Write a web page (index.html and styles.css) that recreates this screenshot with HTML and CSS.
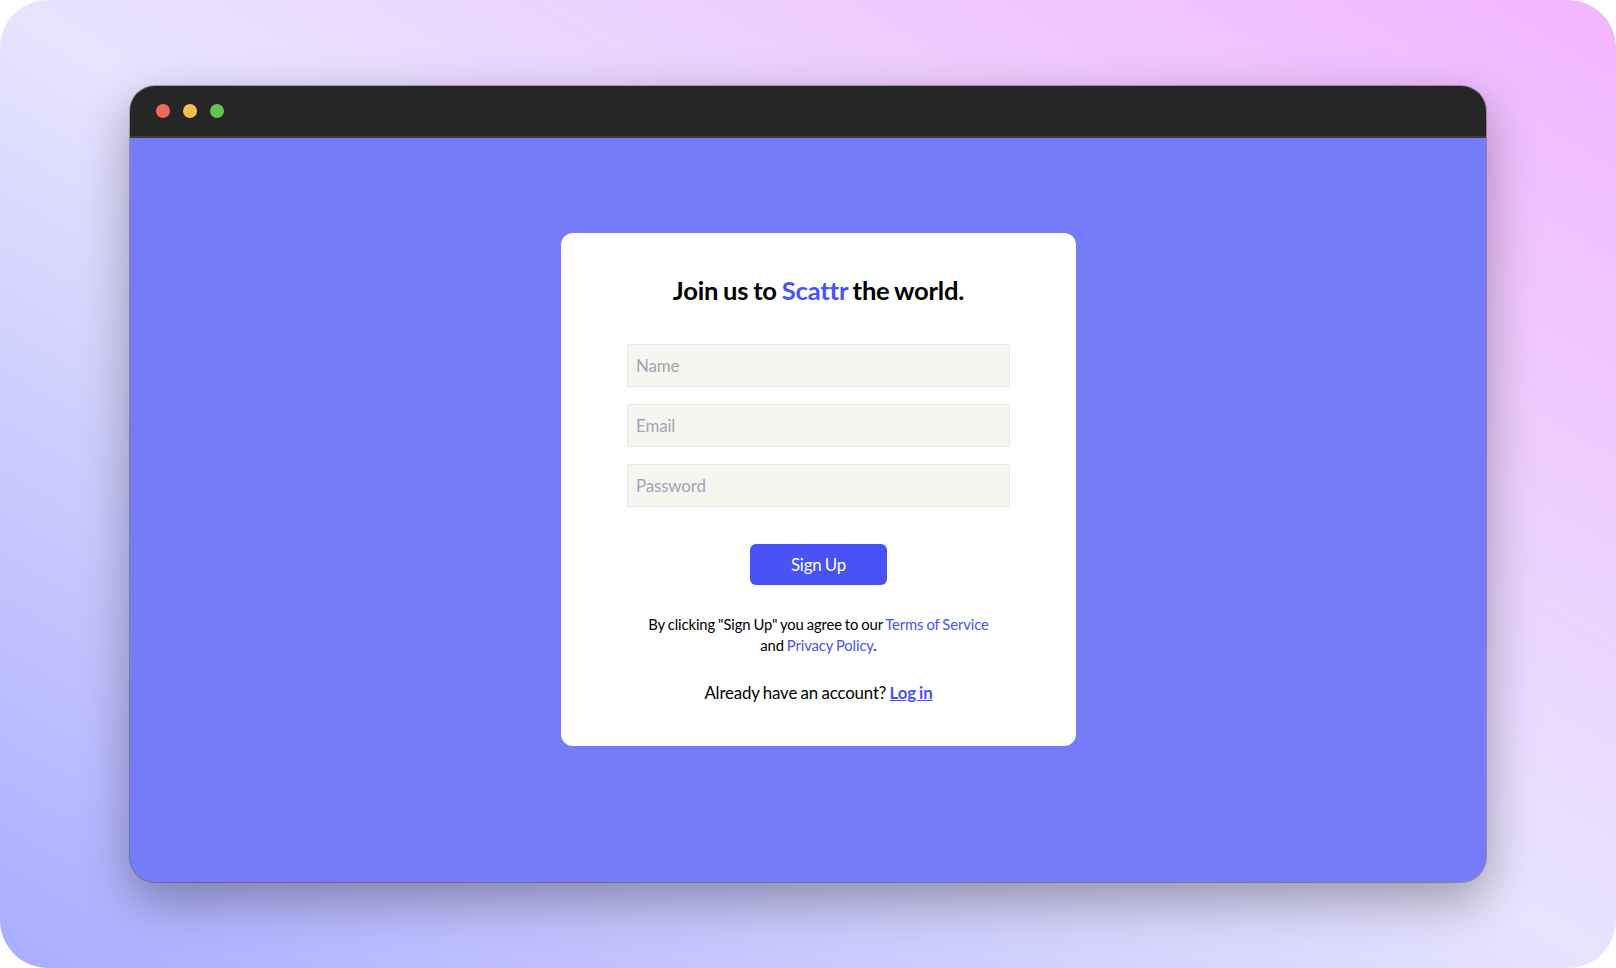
FILE: index.html
```html
<!DOCTYPE html>
<html lang="en">
<head>
<meta charset="utf-8">
<title>Scattr – Sign Up</title>
<link rel="stylesheet" href="styles.css">
</head>
<body>
<div class="backdrop">
  <main class="window">
    <header class="titlebar">
      <span class="dot dot-close"></span>
      <span class="dot dot-minimize"></span>
      <span class="dot dot-zoom"></span>
    </header>
    <div class="page">
      <form class="card">
        <h1 class="heading">Join us to <span class="accent">Scattr</span> the world.</h1>
        <div class="fields">
          <input class="field" type="text" placeholder="Name">
          <input class="field" type="email" placeholder="Email">
          <input class="field" type="password" placeholder="Password">
        </div>
        <button class="submit" type="button">Sign Up</button>
        <p class="terms">By clicking "Sign Up" you agree to our <span class="accent">Terms of Service</span><br>and <span class="accent">Privacy Policy</span>.</p>
        <p class="login">Already have an account? <a class="login-link" href="#">Log in</a></p>
      </form>
    </div>
  </main>
</div>
</body>
</html>
```

FILE: styles.css
```css
* { box-sizing: border-box; }
body {
  margin: 0;
  background: #fff;
  font-family: Lato, "Liberation Sans", sans-serif;
  font-variant-ligatures: none;
  color: #000;
}
.backdrop {
  height: 968px;
  padding: 86px 130px 0;
  border-radius: 48px;
  background: linear-gradient(to top right, #a8adff 0%, #e7e4fd 50%, #f3b5ff 100%);
}
.window {
  height: 796px;
  border-radius: 25px;
  overflow: hidden;
  background: #757bf9;
  box-shadow: 0 0 0 1px rgba(0, 0, 0, .25), 0 18px 50px rgba(0, 0, 0, .33);
}
.titlebar {
  display: flex;
  align-items: center;
  gap: 13px;
  height: 52px;
  padding: 0 26px;
  background: #262626;
  border-bottom: 2px solid #3d3d3d;
}
.dot {
  width: 14px;
  height: 14px;
  border-radius: 50%;
}
.dot-close { background: #ec6a5e; }
.dot-minimize { background: #f4bf4f; }
.dot-zoom { background: #61c554; }
.page {
  display: flex;
  justify-content: center;
  padding: 95px 0 0 21px;
}
.card {
  display: flex;
  flex-direction: column;
  align-items: center;
  width: 515px;
  height: 513px;
  padding: 40px 66px 0;
  border-radius: 12px;
  background: #fff;
}
.heading {
  margin: 0;
  font-size: 25.6px;
  line-height: 34px;
  font-weight: 700;
  letter-spacing: -.008em;
  word-spacing: -.045em;
  white-space: nowrap;
}
.accent { color: #4852f6; }
.fields {
  display: flex;
  flex-direction: column;
  gap: 17px;
  width: 100%;
  margin-top: 37px;
}
.field {
  width: 100%;
  height: 43px;
  padding: 0 8px;
  border: 1px solid #e4e7eb;
  border-radius: 2px;
  background: #f6f5f0;
  font: 16.9px Lato, "Liberation Sans", sans-serif;
  letter-spacing: -.008em;
}
.field::placeholder { color: #9fa5b2; opacity: 1; }
.submit {
  width: 137px;
  height: 41px;
  margin-top: 37px;
  padding: 0;
  border: 0;
  border-radius: 6px;
  background: #4852f6;
  color: #fff;
  font: 16.9px Lato, "Liberation Sans", sans-serif;
  letter-spacing: -.012em;
  word-spacing: -.045em;
}
.terms {
  margin: 29px 0 0;
  font-size: 14.8px;
  line-height: 21px;
  letter-spacing: -.0075em;
  word-spacing: -.045em;
  text-align: center;
  white-space: nowrap;
}
.login {
  margin: 24px 0 0;
  font-size: 16.85px;
  line-height: 26px;
  letter-spacing: -.009em;
  word-spacing: -.045em;
  white-space: nowrap;
}
.login-link { color: #4852f6; font-weight: 700; }
```
